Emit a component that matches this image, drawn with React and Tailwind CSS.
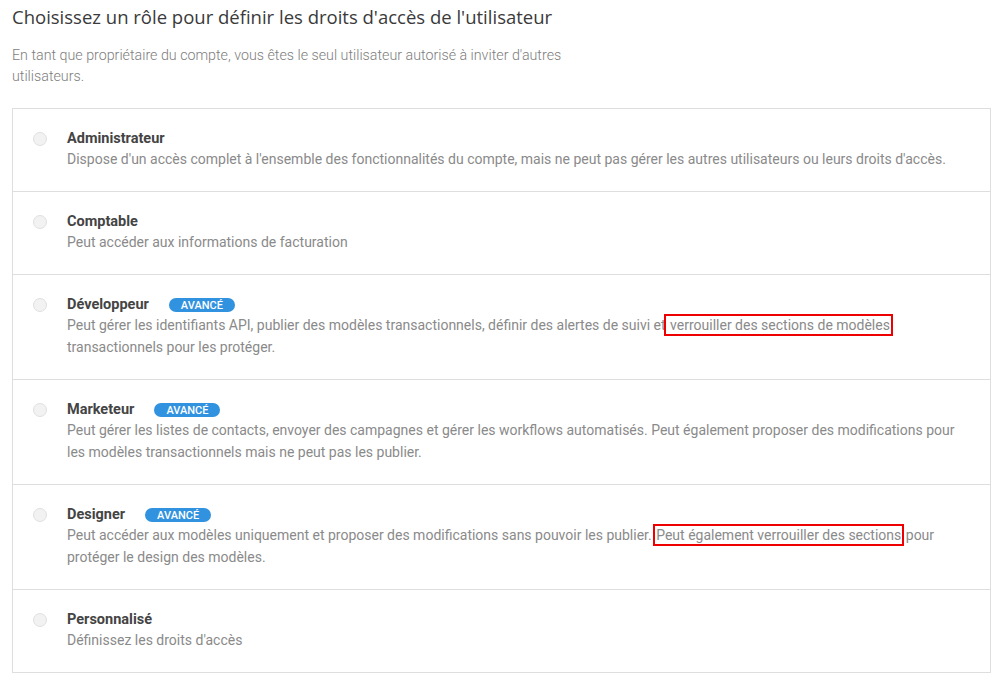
import React from "react";

const Mark = ({ children }) => (
  <span className="outline-2 outline-[#ee0000] px-[1px] py-[1px]">{children}</span>
);

const roles = [
  {
    name: "Administrateur",
    desc: "Dispose d'un accès complet à l'ensemble des fonctionnalités du compte, mais ne peut pas gérer les autres utilisateurs ou leurs droits d'accès.",
  },
  {
    name: "Comptable",
    desc: "Peut accéder aux informations de facturation",
  },
  {
    name: "Développeur",
    advanced: true,
    desc: (
      <>
        Peut gérer les identifiants API, publier des modèles transactionnels, définir des alertes de suivi et
        <Mark> verrouiller des sections de modèles</Mark> transactionnels pour les protéger.
      </>
    ),
  },
  {
    name: "Marketeur",
    advanced: true,
    desc: "Peut gérer les listes de contacts, envoyer des campagnes et gérer les workflows automatisés. Peut également proposer des modifications pour les modèles transactionnels mais ne peut pas les publier.",
  },
  {
    name: "Designer",
    advanced: true,
    desc: (
      <>
        Peut accéder aux modèles uniquement et proposer des modifications sans pouvoir les publier.{" "}
        <Mark>Peut également verrouiller des sections</Mark> pour protéger le design des modèles.
      </>
    ),
  },
  {
    name: "Personnalisé",
    desc: "Définissez les droits d'accès",
  },
];

const App = () => {
  return (
    <div className="min-h-screen bg-white px-3 pt-[4px] font-['Roboto',sans-serif]">
      <h2 className="text-[18.5px] leading-[26px] text-[#3a3a3a] font-['Open_Sans',sans-serif]">
        Choisissez un rôle pour définir les droits d'accès de l'utilisateur
      </h2>
      <p className="mt-[15px] max-w-[570px] text-[14.25px] leading-[21px] text-[#7d7d7d] font-light">
        En tant que propriétaire du compte, vous êtes le seul utilisateur autorisé à inviter d'autres utilisateurs.
      </p>

      <div className="mt-[21px] border border-[#dedede]">
        {roles.map((role, i) => (
          <label
            key={role.name}
            className={`flex pl-5 pr-6 pt-[21px] pb-[21px] cursor-pointer ${
              i > 0 ? "border-t border-[#dedede]" : ""
            }`}
          >
            <span className="mt-[2px] h-[14px] w-[14px] shrink-0 rounded-full border border-[#e0e0e0] bg-[#f2f2f2]" />
            <div className="ml-5">
              <div className="flex items-center h-[18px]">
                <span className="text-[14.5px] font-bold text-[#444]">{role.name}</span>
                {role.advanced && (
                  <span className="ml-5 rounded-full bg-[#3192df] px-3 h-[14px] flex items-center text-[11px] font-medium leading-none text-white">
                    AVANCÉ
                  </span>
                )}
              </div>
              <p className="text-[14px] leading-[22px] text-[#8a8a8a]">{role.desc}</p>
            </div>
          </label>
        ))}
      </div>
    </div>
  );
};

export default App;
